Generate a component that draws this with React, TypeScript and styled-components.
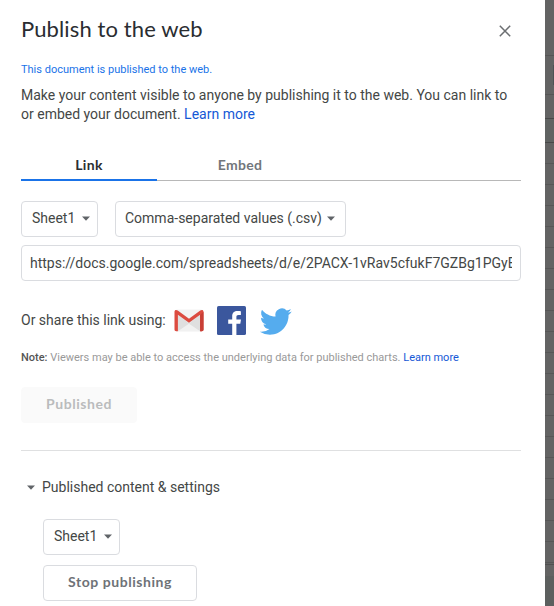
import React from "react";
import styled, { createGlobalStyle } from "styled-components";

const GlobalStyle = createGlobalStyle`
  *, *::before, *::after { box-sizing: border-box; }
  body { margin: 0; background: #636363; font-family: Roboto, "Liberation Sans", sans-serif; }
  button, input { font: inherit; margin: 0; }
`;

const Page = styled.div`
  display: flex;
  width: 554px;
  height: 606px;
  overflow: hidden;
`;

const Dialog = styled.section`
  width: 545px;
  height: 606px;
  padding: 0 24px 0 21px;
  background: #fff;
  overflow: hidden;
  color: #444746;
  font-size: 14px;
  line-height: 19px;
`;

const SheetEdge = styled.aside`
  display: flex;
  flex-direction: column;
  width: 9px;
  height: 606px;
`;

const SheetRow = styled.div<{ $h: number; $line?: string; $bg?: string }>`
  flex: none;
  height: ${(p) => p.$h}px;
  background: ${(p) => p.$bg ?? "#636363"};
  border-bottom: ${(p) => (p.$line ? `1px solid ${p.$line}` : "none")};
`;

const ToolbarRow = styled(SheetRow)`
  display: flex;
  justify-content: flex-end;
  padding-top: 9px;
  &::after {
    content: "";
    width: 1px;
    height: 20px;
    background: #4f5254;
  }
`;

const Header = styled.header`
  display: flex;
  justify-content: space-between;
  height: 61px;
  padding-top: 14px;
`;

const Title = styled.h1`
  margin: -1px 0 0;
  font: 400 22px/32px Lato, sans-serif;
  letter-spacing: 0.12px;
  color: #2a2d31;
`;

const CloseButton = styled.button`
  width: 12px;
  height: 12px;
  margin: 11px 10px 0 0;
  padding: 0;
  border: 0;
  background: none;
  svg { display: block; }
`;

const Status = styled.p`
  margin: 0;
  height: 25px;
  font-size: 11px;
  line-height: 18px;
  color: #1a73e8;
`;

const Intro = styled.p`
  margin: 0;
  height: 64px;
  white-space: nowrap;
`;

const Link = styled.a`
  color: #1558d6;
`;

const Tabs = styled.nav`
  display: flex;
  height: 31px;
  background: linear-gradient(#b8b8b8, #b8b8b8) 0 30px / 100% 1px no-repeat;
`;

const Tab = styled.div<{ $active?: boolean; $w: number }>`
  width: ${(p) => p.$w}px;
  height: 31px;
  text-align: center;
  font: 700 14px/29px Lato, sans-serif;
  letter-spacing: 0.3px;
  color: ${(p) => (p.$active ? "#2a2d31" : "#72767b")};
  border-bottom: ${(p) => (p.$active ? "2px solid #1a73e8" : "none")};
`;

const SelectRow = styled.div<{ $indent?: boolean }>`
  display: flex;
  gap: 17px;
  margin-top: 20px;
  padding-left: ${(p) => (p.$indent ? 22 : 0)}px;
`;

const Select = styled.button<{ $w: number; $wide?: boolean }>`
  display: flex;
  justify-content: space-between;
  align-items: center;
  width: ${(p) => p.$w}px;
  height: 36px;
  padding: ${(p) => (p.$wide ? "0 10px 2px 9px" : "0 7px 2px 10px")};
  border: 1px solid #dadce0;
  border-radius: 4px;
  background: #fff;
  color: #444746;
  white-space: nowrap;
`;

const UrlField = styled.input`
  display: block;
  width: 500px;
  height: 36px;
  margin-top: 8px;
  padding: 0 8px;
  border: 1px solid #dadce0;
  border-radius: 4px;
  color: #444746;
  outline: none;
`;

const ShareRow = styled.div`
  display: flex;
  align-items: center;
  height: 30px;
  margin-top: 24px;
  svg { flex: none; display: block; }
`;

const ShareLabel = styled.span`
  width: 153px;
  white-space: nowrap;
`;

const Icons = styled.div`
  display: flex;
  align-items: center;
  gap: 13px;
`;

const Note = styled.p`
  margin: 14px 0 0;
  height: 20px;
  font-size: 11px;
  line-height: 18px;
  color: #999;
  white-space: nowrap;
  b { font-weight: 500; color: #555; }
`;

const Button = styled.button<{ $disabled?: boolean; $w: number }>`
  display: block;
  width: ${(p) => p.$w}px;
  height: 36px;
  padding: 0 0 2px;
  border: 1px solid ${(p) => (p.$disabled ? "#fafafa" : "#dadce0")};
  border-radius: 4px;
  background: ${(p) => (p.$disabled ? "#fafafa" : "#fff")};
  color: ${(p) => (p.$disabled ? "#babcbd" : "#6e7277")};
  font: 700 14px/20px Lato, sans-serif;
  letter-spacing: 0.55px;
`;

const PublishArea = styled.div`
  height: 82px;
  padding-top: 18px;
  border-bottom: 1px solid #dfe0e1;
`;

const Disclosure = styled.div`
  display: flex;
  align-items: center;
  gap: 7px;
  height: 20px;
  margin: 26px 0 22px;
  padding-left: 6px;
`;

const StopArea = styled.div`
  padding: 10px 0 0 22px;
`;

const Caret = () => (
  <svg width="8" height="5" viewBox="0 0 8 5" aria-hidden="true">
    <path d="M0 .5h8L4 4.7z" fill="#606468" />
  </svg>
);

const GmailIcon = () => (
  <svg width="30" height="22" viewBox="0 -0.8 30 22" overflow="visible" role="img" aria-label="Gmail">
    <rect x="1" width="28" height="21.5" rx="1.5" fill="#e8e8e8" />
    <path d="M4 21.500V5l11 9-11 7.500zM26 21.500V5L15 14z" fill="#dfdfdf" />
    <path d="M4 21.500 15 14l11 7.500z" fill="#f1f1f1" />
    <path d="M3 .3h24L15 8.800z" fill="#f2f2f2" />
    <path d="M.5 2C.5.2 2.300-.3 3.700.8L15 8.900 26.300.8c1.400-1.100 3.200-.6 3.200 1.200v17.800c0 1-.7 1.700-1.700 1.700h-1.700V5L15 13 3.900 5v16.500H2.200c-1 0-1.700-.7-1.700-1.700z" fill="#dc4b40" />
    <path d="M26.100 5.100 29.500 2v17.800c0 1-.7 1.700-1.700 1.700h-1.700z" fill="#c83f36" />
  </svg>
);

const FacebookIcon = () => (
  <svg width="29" height="29" viewBox="0 0 29 29" role="img" aria-label="Facebook">
    <rect width="29" height="29" rx="1.600" fill="#3b579d" />
    <path d="M15.200 29V17.800h-4v-4.300h4v-3.300C15.200 6.700 17.300 5 20.500 5c1.500 0 2.900.1 3.400.2v3.900h-2.400c-1.700 0-2.100.8-2.100 2v2.400H24l-.7 4.300h-3.900V29z" fill="#fff" />
  </svg>
);

const TwitterIcon = () => (
  <svg width="32" height="27" viewBox="-0.6 -0.8 24 20" preserveAspectRatio="none" overflow="visible" role="img" aria-label="Twitter">
    <path d="M23.950 2.570a10 10 0 0 1-2.820.780 4.960 4.960 0 0 0 2.160-2.730c-.95.560-2 .960-3.120 1.180a4.920 4.920 0 0 0-8.380 4.480C7.690 6.090 4.070 4.130 1.640 1.160a4.900 4.900 0 0 0 1.520 6.570 4.900 4.900 0 0 1-2.230-.61v.06a4.920 4.920 0 0 0 3.950 4.830 5 5 0 0 1-2.210.08 4.940 4.940 0 0 0 4.600 3.420A9.870 9.870 0 0 1 0 17.540a14 14 0 0 0 7.560 2.210c9.050 0 13.990-7.500 13.990-13.980 0-.21 0-.42-.02-.63a9.940 9.940 0 0 0 2.420-2.570z" fill="#55acee" />
  </svg>
);

const gridRows = Array.from({ length: 20 }, (_, i) => i);

export default function App() {
  return (
    <>
      <GlobalStyle />
      <Page>
        <Dialog role="dialog" aria-label="Publish to the web">
          <Header>
            <Title>Publish to the web</Title>
            <CloseButton aria-label="Close">
              <svg width="12" height="12" viewBox="0 0 12 12">
                <path d="M.8.8 11.200 11.200M11.200.8.8 11.200" stroke="#6b6e71" strokeWidth="1.500" />
              </svg>
            </CloseButton>
          </Header>
          <Status>This document is published to the web.</Status>
          <Intro>
            Make your content visible to anyone by publishing it to the web. You can link to
            <br />
            or embed your document. <Link>Learn more</Link>
          </Intro>
          <Tabs>
            <Tab $active $w={136}>Link</Tab>
            <Tab $w={166}>Embed</Tab>
          </Tabs>
          <SelectRow>
            <Select $w={77}>Sheet1<Caret /></Select>
            <Select $w={231} $wide>Comma-separated values (.csv)<Caret /></Select>
          </SelectRow>
          <UrlField
            readOnly
            aria-label="Published link"
            value="https://docs.google.com/spreadsheets/d/e/2PACX-1vRav5cfukF7GZBg1PGyE"
          />
          <ShareRow>
            <ShareLabel>Or share this link using:</ShareLabel>
            <Icons>
              <GmailIcon />
              <FacebookIcon />
              <TwitterIcon />
            </Icons>
          </ShareRow>
          <Note>
            <b>Note:</b> Viewers may be able to access the underlying data for published charts. <Link>Learn more</Link>
          </Note>
          <PublishArea>
            <Button $disabled $w={116}>Published</Button>
          </PublishArea>
          <Disclosure>
            <Caret />
            Published content &amp; settings
          </Disclosure>
          <SelectRow $indent>
            <Select $w={77}>Sheet1<Caret /></Select>
          </SelectRow>
          <StopArea>
            <Button $w={154}>Stop publishing</Button>
          </StopArea>
        </Dialog>
        <SheetEdge aria-hidden="true">
          <SheetRow $h={56} $line="#555" />
          <ToolbarRow $h={39} $line="#555" />
          <SheetRow $h={24} $line="#484848" />
          <SheetRow $h={24} $line="#484848" $bg="#606362" />
          {gridRows.map((i) => (
            <SheetRow key={i} $h={21} $line="#565656" />
          ))}
          <SheetRow $h={2} $line="#505050" />
          <SheetRow $h={11} />
          <SheetRow $h={30} $bg="#5c5f5e" />
        </SheetEdge>
      </Page>
    </>
  );
}
